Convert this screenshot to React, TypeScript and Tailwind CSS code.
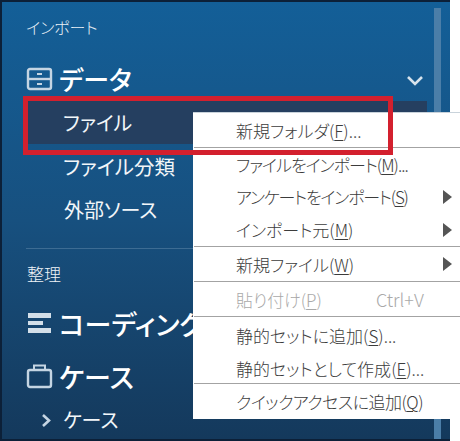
const sans = "font-['Noto_Sans_CJK_JP','Noto_Sans_CJK_SC',sans-serif] [font-feature-settings:'palt']";

function Arrow() {
  return (
    <svg width="9" height="14" viewBox="0 0 9 14" className="shrink-0">
      <path d="M0 0 L9 7 L0 14 Z" fill="#555" />
    </svg>
  );
}

function U({ children }: { children: string }) {
  return <span className="underline underline-offset-2 decoration-1">{children}</span>;
}

function Item({ label, k, tail = "", arrow = false, h, disabled = false, shortcut, tight = "" }: { label: string; k: string; tail?: string; arrow?: boolean; h: string; disabled?: boolean; shortcut?: string; tight?: string }) {
  return (
    <div className={`flex items-center pl-[43px] pr-[8px] text-[17px] leading-none font-light ${h} ${disabled ? "text-[#a9a9a9]" : "text-[#3c3c3c]"}`}>
      <span className={`whitespace-nowrap ${tight}`}>
        {label}(<U>{k}</U>){tail}
      </span>
      {shortcut && <span className="ml-[54px] text-[18px]">{shortcut}</span>}
      {arrow && <span className="ml-auto"><Arrow /></span>}
    </div>
  );
}

function Sep() {
  return <div className="h-px ml-px bg-[#a3a3a3]" />;
}

export default function App() {
  return (
    <div className={`relative w-[460px] h-[441px] overflow-hidden bg-white ${sans}`}>
      <div className="h-[441px] w-[450px] overflow-hidden border-l-2 border-t-2 border-b-2 border-[#0c2038] bg-gradient-to-b from-[#135f98] via-[#17507f] to-[#14395c] flex">
        <div className="flex-1 min-w-0 flex flex-col">
          <div className="pl-[24px] pt-[14px] h-[43px] text-[16px] leading-[22px] font-light text-[#e8eff5]">インポート</div>
          <div className="mt-[12px] h-[44px] pl-[24px] pr-[10px] flex items-center text-white">
            <svg width="27" height="24" viewBox="0 0 27 24" fill="none" stroke="#c5d5e3" strokeWidth="2.4" className="shrink-0">
              <rect x="2" y="2" width="23" height="20" rx="2" />
              <path d="M2 12 H25" />
              <path d="M11 7 H16 M11 17 H16" strokeWidth="1.8" />
            </svg>
            <span className="ml-[6px] text-[26px] leading-none font-medium">データ</span>
            <svg width="18" height="11" viewBox="0 0 18 11" fill="none" stroke="#d7e3ec" strokeWidth="2.6" className="ml-auto mt-[2px]">
              <path d="M2 2 L9 9 L16 2" />
            </svg>
          </div>
          <div className="ml-[26px] mr-[7px] h-[43px] bg-[#253f60] pl-[35px] flex items-center text-[20px] text-[#f2f6f9]">ファイル</div>
          <div className="h-[44px] pl-[61px] flex items-center text-[20.5px] text-[#f2f6f9]">ファイル分類</div>
          <div className="h-[44px] pl-[62px] flex items-center text-[20px] text-[#f2f6f9]">外部ソース</div>
          <div className="ml-[24px] mt-[16px] h-px bg-[#3d6c93]" />
          <div className="pl-[25px] mt-[13px] h-[24px] text-[17px] leading-[24px] font-light text-[#eef3f7]">整理</div>
          <div className="mt-[13px] h-[48px] pl-[25px] flex items-center text-white whitespace-nowrap">
            <svg width="25" height="24" viewBox="0 0 25 24" fill="#d3dfe9" className="shrink-0">
              <rect x="1" y="2" width="23" height="5" />
              <rect x="1" y="10" width="15" height="4" />
              <rect x="1" y="17" width="23" height="5" />
            </svg>
            <span className="ml-[7px] text-[27px] leading-none font-medium">コーディング</span>
          </div>
          <div className="mt-[5px] h-[48px] pl-[24px] flex items-center text-white">
            <svg width="27" height="26" viewBox="0 0 27 26" fill="none" stroke="#c5d5e3" strokeWidth="2.4" className="shrink-0">
              <rect x="2" y="7" width="23" height="17" rx="2" />
              <path d="M8 7 V2.5 H19 V7" strokeWidth="2" />
            </svg>
            <span className="ml-[6px] text-[27px] leading-none font-medium">ケース</span>
          </div>
          <div className="mt-[6px] h-[28px] pl-[39px] flex items-center text-[#f2f6f9]">
            <svg width="11" height="15" viewBox="0 0 11 15" fill="none" stroke="#c5d5e3" strokeWidth="2.6" className="shrink-0">
              <path d="M2 2 L8 7.5 L2 13" />
            </svg>
            <span className="ml-[11px] text-[20px] leading-none">ケース</span>
          </div>
        </div>
        <div className="w-[7px] mt-[6px] mr-[9px] shrink-0 bg-[#4b7ea8]" />
      </div>

      <div className="absolute left-[193px] top-[112px] w-[267px] h-[307px] bg-white border-t border-[#c9d3db] flex flex-col">
        <Item label="新規フォルダ" k="F" tail="..." h="h-[34px]" />
        <Sep />
        <Item label="ファイルをインポート" k="M" tail="..." tight="tracking-[-1px]" h="h-[32px]" />
        <Item label="アンケートをインポート" k="S" arrow tight="tracking-[-1.2px]" h="h-[33px]" />
        <Item label="インポート元" k="M" arrow h="h-[33px]" />
        <Sep />
        <Item label="新規ファイル" k="W" arrow h="h-[34px]" />
        <Sep />
        <Item label="貼り付け" k="P" disabled shortcut="Ctrl+V" h="h-[34px]" />
        <Sep />
        <Item label="静的セットに追加" k="S" tail="..." h="h-[36px]" />
        <Item label="静的セットとして作成" k="E" tail="..." h="h-[30px]" />
        <Sep />
        <Item label="クイックアクセスに追加" k="Q" tight="tracking-[-0.5px]" h="h-[35px]" />
      </div>

      <div className="absolute left-[23px] top-[96px] w-[370px] h-[59px] border-[5px] border-[#d3202e] pointer-events-none" />
    </div>
  );
}
